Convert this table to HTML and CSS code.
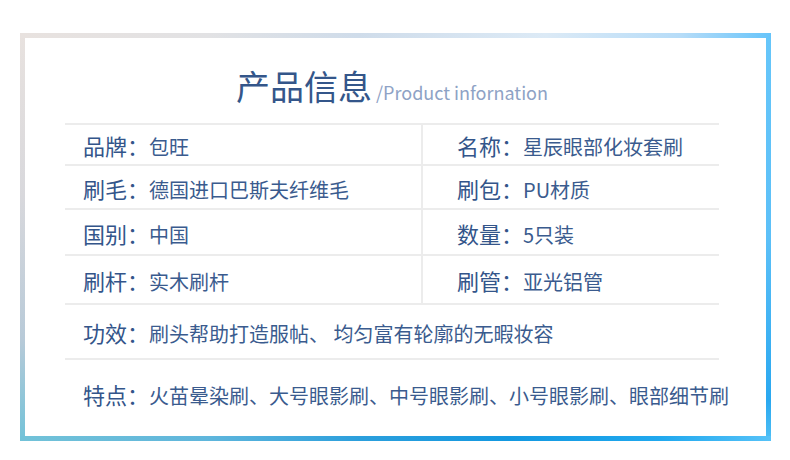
FILE: index.html
```html
<!DOCTYPE html>
<html lang="zh-CN">
<head>
<meta charset="utf-8">
<title>产品信息</title>
<link rel="stylesheet" href="styles.css">
</head>
<body>
<div class="frame">
  <div class="inner">
    <div class="title">
      <span class="title-cn">产品信息</span><span class="title-en">/Product infornation</span>
    </div>
    <div class="table">
      <div class="cell left r1"><div class="text"><span class="label">品牌：</span><span class="value">包旺</span></div></div>
      <div class="cell right r1"><div class="text"><span class="label">名称：</span><span class="value">星辰眼部化妆套刷</span></div></div>
      <div class="cell left r2"><div class="text"><span class="label">刷毛：</span><span class="value">德国进口巴斯夫纤维毛</span></div></div>
      <div class="cell right r2"><div class="text"><span class="label">刷包：</span><span class="value">PU材质</span></div></div>
      <div class="cell left r3"><div class="text"><span class="label">国别：</span><span class="value">中国</span></div></div>
      <div class="cell right r3"><div class="text"><span class="label">数量：</span><span class="value">5只装</span></div></div>
      <div class="cell left r4"><div class="text"><span class="label">刷杆：</span><span class="value">实木刷杆</span></div></div>
      <div class="cell right r4"><div class="text"><span class="label">刷管：</span><span class="value">亚光铝管</span></div></div>
      <div class="cell full r5"><div class="text"><span class="label">功效：</span><span class="value">刷头帮助打造服帖、 均匀富有轮廓的无暇妆容</span></div></div>
      <div class="cell full r6 last"><div class="text"><span class="label">特点：</span><span class="value">火苗晕染刷、大号眼影刷、中号眼影刷、小号眼影刷、眼部细节刷</span></div></div>
    </div>
  </div>
</div>
</body>
</html>
```
FILE: styles.css
```css
html, body {
  margin: 0;
  padding: 0;
  background: #ffffff;
}

body {
  font-family: "Noto Sans CJK SC", "Noto Sans", sans-serif;
  width: 790px;
  height: 460px;
  overflow: hidden;
}

.frame {
  margin: 33px 0 0 20px;
  width: 751px;
  height: 408px;
  box-sizing: border-box;
  padding: 5px;
  background:
    linear-gradient(to right, #e8e2df 0%, #e2e2e4 25%, #cfdcea 45%, #dceaf6 70%, #b6dcf8 88%, #66c4fa 100%) top / 100% 5px no-repeat,
    linear-gradient(to right, #72c2d8 0%, #5fb6dc 25%, #2c9fdc 45%, #1398e0 65%, #20a8ee 85%, #56c2f8 100%) bottom / 100% 5px no-repeat,
    linear-gradient(to bottom, #e8e2df 0%, #d8d8dc 40%, #b8cad8 75%, #72c2d8 100%) left / 5px 100% no-repeat,
    linear-gradient(to bottom, #66c6fa 0%, #5cc0f8 50%, #2aa8f0 90%, #50c0f5 100%) right / 5px 100% no-repeat;
}

.inner {
  background: #ffffff;
  height: 100%;
  box-sizing: border-box;
  padding: 0 47px 0 40px;
}

.title {
  height: 85px;
  display: flex;
  justify-content: center;
  align-items: baseline;
  padding-top: 31px;
  box-sizing: border-box;
  line-height: 1;
}

.title-cn {
  font-size: 34px;
  color: #34568a;
}

.title-en {
  font-size: 18px;
  color: #8ea2c5;
  margin-left: 4px;
}

.table {
  display: grid;
  grid-template-columns: 358px 1fr;
  grid-template-rows: 41px 44px 46px 49px 55px 66px;
  border-top: 2px solid #ececec;
}

.cell {
  display: flex;
  align-items: center;
  box-sizing: border-box;
  border-bottom: 2px solid #ececec;
  color: #33558a;
  white-space: nowrap;
}

.cell.left {
  padding-left: 18px;
  border-right: 2px solid #ececec;
}

.cell.right {
  padding-left: 34px;
}

.cell.full {
  grid-column: 1 / 3;
  padding-left: 18px;
}

.cell.last {
  border-bottom: none;
}

.text {
  line-height: 1;
  padding-top: 2px;
}

.label {
  font-size: 22px;
}

.value {
  font-size: 20px;
  color: #3a5b8e;
}
```
